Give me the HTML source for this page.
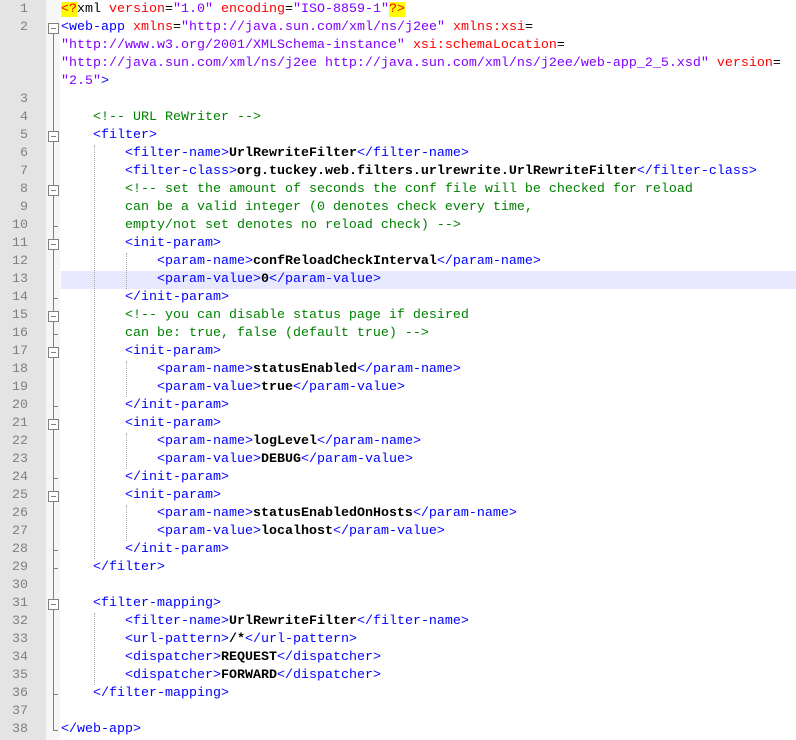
<!DOCTYPE html>
<html><head><meta charset="utf-8"><style>
body{margin:0;width:796px;height:740px;background:#fff;position:relative;overflow:hidden;font-family:"Liberation Mono","Courier New",monospace;font-size:13.33px}
#gut{position:absolute;left:0;top:0;width:46px;height:740px;background:#e4e4e4}
#fold{position:absolute;left:46px;top:0;width:14px;height:740px;background:repeating-conic-gradient(#f0f0f0 0 25%,#fcfcfc 0 50%) 0 0/2px 2px}
.n{position:absolute;left:0;width:28px;text-align:right;color:#808080;height:18px;line-height:18px}
.r{position:absolute;left:61px;height:18px;line-height:18px;white-space:pre;color:#000}
.t{color:#0000ff}.a{color:#ff0000}.v{color:#8000ff}.c{color:#008000}.b{font-weight:bold;color:#000}
.y{background:#ffff00;color:#ff0000}
.hl{position:absolute;left:61px;width:735px;height:18px;background:#e8e8ff}
.g{position:absolute;width:0;border-left:1px dotted #a8a8a8}
.box{position:absolute;left:48px;width:9px;height:9px;border:1px solid #808080;background:#fff;z-index:2}
.box:after{content:"";position:absolute;left:2px;top:4px;width:5px;height:1px;background:#808080}
.vl{position:absolute;left:53px;width:1px;background:#808080}
.tk{position:absolute;left:53px;width:5px;height:1px;background:#808080}
</style></head><body>
<div id="gut"></div><div id="fold"></div>
<div class="hl" style="top:271px"></div>

<div class="vl" style="top:30px;height:700px"></div>
<div class="box" style="top:23px"></div>
<div class="box" style="top:131px"></div>
<div class="box" style="top:185px"></div>
<div class="box" style="top:239px"></div>
<div class="box" style="top:311px"></div>
<div class="box" style="top:347px"></div>
<div class="box" style="top:419px"></div>
<div class="box" style="top:491px"></div>
<div class="box" style="top:599px"></div>
<div class="tk" style="top:226px"></div>
<div class="tk" style="top:298px"></div>
<div class="tk" style="top:334px"></div>
<div class="tk" style="top:406px"></div>
<div class="tk" style="top:478px"></div>
<div class="tk" style="top:550px"></div>
<div class="tk" style="top:568px"></div>
<div class="tk" style="top:694px"></div>
<div class="tk" style="top:730px"></div>

<div class="g" style="left:94px;top:145px;height:414px"></div>
<div class="g" style="left:94px;top:613px;height:72px"></div>
<div class="g" style="left:126px;top:253px;height:36px"></div>
<div class="g" style="left:126px;top:361px;height:36px"></div>
<div class="g" style="left:126px;top:433px;height:36px"></div>
<div class="g" style="left:126px;top:505px;height:36px"></div>

<div class="n" style="top:1px">1</div><div class="r" style="top:1px"><span class="y">&lt;?</span>xml <span class="a">version</span>=<span class="v">"1.0"</span> <span class="a">encoding</span>=<span class="v">"ISO-8859-1"</span><span class="y">?&gt;</span></div>
<div class="n" style="top:19px">2</div><div class="r" style="top:19px"><span class="t">&lt;web-app</span> <span class="a">xmlns</span>=<span class="v">"http://java.sun.com/xml/ns/j2ee"</span> <span class="a">xmlns:xsi</span>=</div>
<div class="r" style="top:37px"><span class="v">"http://www.w3.org/2001/XMLSchema-instance"</span> <span class="a">xsi:schemaLocation</span>=</div>
<div class="r" style="top:55px"><span class="v">"http://java.sun.com/xml/ns/j2ee http://java.sun.com/xml/ns/j2ee/web-app_2_5.xsd"</span> <span class="a">version</span>=</div>
<div class="r" style="top:73px"><span class="v">"2.5"</span><span class="t">&gt;</span></div>
<div class="n" style="top:91px">3</div>
<div class="n" style="top:109px">4</div><div class="r c" style="top:109px">    &lt;!-- URL ReWriter --&gt;</div>
<div class="n" style="top:127px">5</div><div class="r t" style="top:127px">    &lt;filter&gt;</div>
<div class="n" style="top:145px">6</div><div class="r" style="top:145px"><span class="t">        &lt;filter-name&gt;</span><span class="b">UrlRewriteFilter</span><span class="t">&lt;/filter-name&gt;</span></div>
<div class="n" style="top:163px">7</div><div class="r" style="top:163px"><span class="t">        &lt;filter-class&gt;</span><span class="b">org.tuckey.web.filters.urlrewrite.UrlRewriteFilter</span><span class="t">&lt;/filter-class&gt;</span></div>
<div class="n" style="top:181px">8</div><div class="r c" style="top:181px">        &lt;!-- set the amount of seconds the conf file will be checked for reload</div>
<div class="n" style="top:199px">9</div><div class="r c" style="top:199px">        can be a valid integer (0 denotes check every time,</div>
<div class="n" style="top:217px">10</div><div class="r c" style="top:217px">        empty/not set denotes no reload check) --&gt;</div>
<div class="n" style="top:235px">11</div><div class="r t" style="top:235px">        &lt;init-param&gt;</div>
<div class="n" style="top:253px">12</div><div class="r" style="top:253px"><span class="t">            &lt;param-name&gt;</span><span class="b">confReloadCheckInterval</span><span class="t">&lt;/param-name&gt;</span></div>
<div class="n" style="top:271px">13</div><div class="r" style="top:271px"><span class="t">            &lt;param-value&gt;</span><span class="b">0</span><span class="t">&lt;/param-value&gt;</span></div>
<div class="n" style="top:289px">14</div><div class="r t" style="top:289px">        &lt;/init-param&gt;</div>
<div class="n" style="top:307px">15</div><div class="r c" style="top:307px">        &lt;!-- you can disable status page if desired</div>
<div class="n" style="top:325px">16</div><div class="r c" style="top:325px">        can be: true, false (default true) --&gt;</div>
<div class="n" style="top:343px">17</div><div class="r t" style="top:343px">        &lt;init-param&gt;</div>
<div class="n" style="top:361px">18</div><div class="r" style="top:361px"><span class="t">            &lt;param-name&gt;</span><span class="b">statusEnabled</span><span class="t">&lt;/param-name&gt;</span></div>
<div class="n" style="top:379px">19</div><div class="r" style="top:379px"><span class="t">            &lt;param-value&gt;</span><span class="b">true</span><span class="t">&lt;/param-value&gt;</span></div>
<div class="n" style="top:397px">20</div><div class="r t" style="top:397px">        &lt;/init-param&gt;</div>
<div class="n" style="top:415px">21</div><div class="r t" style="top:415px">        &lt;init-param&gt;</div>
<div class="n" style="top:433px">22</div><div class="r" style="top:433px"><span class="t">            &lt;param-name&gt;</span><span class="b">logLevel</span><span class="t">&lt;/param-name&gt;</span></div>
<div class="n" style="top:451px">23</div><div class="r" style="top:451px"><span class="t">            &lt;param-value&gt;</span><span class="b">DEBUG</span><span class="t">&lt;/param-value&gt;</span></div>
<div class="n" style="top:469px">24</div><div class="r t" style="top:469px">        &lt;/init-param&gt;</div>
<div class="n" style="top:487px">25</div><div class="r t" style="top:487px">        &lt;init-param&gt;</div>
<div class="n" style="top:505px">26</div><div class="r" style="top:505px"><span class="t">            &lt;param-name&gt;</span><span class="b">statusEnabledOnHosts</span><span class="t">&lt;/param-name&gt;</span></div>
<div class="n" style="top:523px">27</div><div class="r" style="top:523px"><span class="t">            &lt;param-value&gt;</span><span class="b">localhost</span><span class="t">&lt;/param-value&gt;</span></div>
<div class="n" style="top:541px">28</div><div class="r t" style="top:541px">        &lt;/init-param&gt;</div>
<div class="n" style="top:559px">29</div><div class="r t" style="top:559px">    &lt;/filter&gt;</div>
<div class="n" style="top:577px">30</div>
<div class="n" style="top:595px">31</div><div class="r t" style="top:595px">    &lt;filter-mapping&gt;</div>
<div class="n" style="top:613px">32</div><div class="r" style="top:613px"><span class="t">        &lt;filter-name&gt;</span><span class="b">UrlRewriteFilter</span><span class="t">&lt;/filter-name&gt;</span></div>
<div class="n" style="top:631px">33</div><div class="r" style="top:631px"><span class="t">        &lt;url-pattern&gt;</span><span class="b">/*</span><span class="t">&lt;/url-pattern&gt;</span></div>
<div class="n" style="top:649px">34</div><div class="r" style="top:649px"><span class="t">        &lt;dispatcher&gt;</span><span class="b">REQUEST</span><span class="t">&lt;/dispatcher&gt;</span></div>
<div class="n" style="top:667px">35</div><div class="r" style="top:667px"><span class="t">        &lt;dispatcher&gt;</span><span class="b">FORWARD</span><span class="t">&lt;/dispatcher&gt;</span></div>
<div class="n" style="top:685px">36</div><div class="r t" style="top:685px">    &lt;/filter-mapping&gt;</div>
<div class="n" style="top:703px">37</div>
<div class="n" style="top:721px">38</div><div class="r t" style="top:721px">&lt;/web-app&gt;</div>
</body></html>
